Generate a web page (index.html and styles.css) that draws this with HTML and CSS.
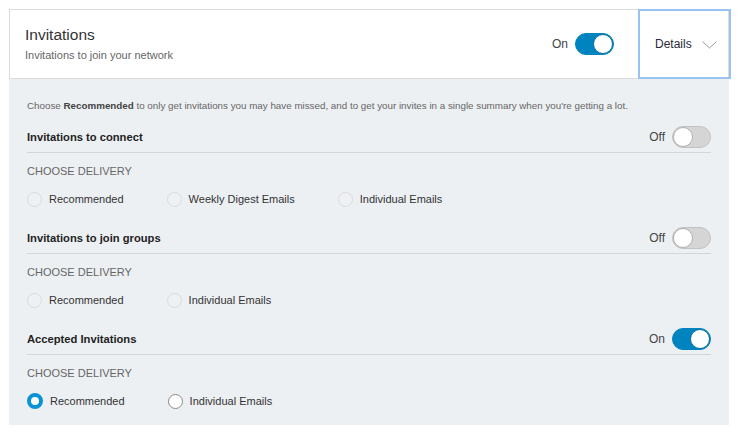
FILE: index.html
```html
<!DOCTYPE html>
<html lang="en">
<head>
    <meta charset="UTF-8">
    <meta name="viewport" content="width=device-width, initial-scale=1.0">
    <title>Invitations settings</title>
    <link rel="stylesheet" href="styles.css">
</head>
<body>
    <div class="settings">
        <div class="header">
            <div class="header-text">
                <div class="title">Invitations</div>
                <div class="subtitle">Invitations to join your network</div>
            </div>
            <div class="switch-wrap header-switch">
                <span class="switch-label">On</span>
                <span class="toggle on"><span class="knob"></span></span>
            </div>
            <div class="details">
                <span>Details</span>
                <svg class="chevron" width="15" height="8" viewBox="0 0 15 8">
                    <polyline points="0.5,0.5 7.5,7 14.5,0.5" fill="none" stroke="#9a9a9a" stroke-width="1"/>
                </svg>
            </div>
        </div>

        <div class="panel">
            <p class="intro">Choose <b>Recommended</b> to only get invitations you may have missed, and to get your invites in a single summary when you're getting a lot.</p>

            <div class="group">
                <div class="group-head">
                    <span class="group-title">Invitations to connect</span>
                    <div class="switch-wrap">
                        <span class="switch-label">Off</span>
                        <span class="toggle"><span class="knob"></span></span>
                    </div>
                </div>
                <div class="delivery-label">CHOOSE DELIVERY</div>
                <div class="options">
                    <label class="option"><span class="radio disabled"></span>Recommended</label>
                    <label class="option"><span class="radio disabled"></span>Weekly Digest Emails</label>
                    <label class="option"><span class="radio disabled"></span>Individual Emails</label>
                </div>
            </div>

            <div class="group">
                <div class="group-head">
                    <span class="group-title">Invitations to join groups</span>
                    <div class="switch-wrap">
                        <span class="switch-label">Off</span>
                        <span class="toggle"><span class="knob"></span></span>
                    </div>
                </div>
                <div class="delivery-label">CHOOSE DELIVERY</div>
                <div class="options">
                    <label class="option"><span class="radio disabled"></span>Recommended</label>
                    <label class="option"><span class="radio disabled"></span>Individual Emails</label>
                </div>
            </div>

            <div class="group">
                <div class="group-head">
                    <span class="group-title">Accepted Invitations</span>
                    <div class="switch-wrap">
                        <span class="switch-label">On</span>
                        <span class="toggle on"><span class="knob"></span></span>
                    </div>
                </div>
                <div class="delivery-label">CHOOSE DELIVERY</div>
                <div class="options">
                    <label class="option"><span class="radio checked"></span>Recommended</label>
                    <label class="option"><span class="radio"></span>Individual Emails</label>
                </div>
            </div>
        </div>
    </div>
</body>
</html>
```

FILE: styles.css
```css
:root {
    --font: "Liberation Sans", Arial, Helvetica, sans-serif;
    --text-main: #333333;
    --text-secondary: #666666;
    --panel-bg: #edf0f3;
    --line: #d3d6d9;
    --accent: #0084bf;
}
body {
    font-family: var(--font);
    background-color: #ffffff;
    margin: 0;
    color: var(--text-main);
}
.settings {
    width: 720px;
    margin: 9px 0 0 9px;
}
.header {
    display: flex;
    height: 70px;
    box-sizing: border-box;
    border: 1px solid #dcdcdc;
    background-color: #ffffff;
}
.header-text {
    flex: 1;
    padding: 16px 15px 0;
}
.title {
    font-size: 15.5px;
    line-height: 18px;
    color: #333;
}
.subtitle {
    font-size: 11px;
    line-height: 14px;
    margin-top: 4px;
    color: #666;
}
.switch-wrap {
    display: flex;
    align-items: center;
    gap: 7px;
}
.header-switch {
    margin-right: 24px;
}
.switch-label {
    font-size: 12px;
    color: #444;
}
.toggle {
    display: flex;
    width: 39px;
    height: 22px;
    box-sizing: border-box;
    padding: 1px;
    border-radius: 11px;
    background-color: #d5d5d5;
    border: 1px solid #c2c2c2;
}
.toggle.on {
    justify-content: flex-end;
    background-color: var(--accent);
    border-color: var(--accent);
}
.knob {
    width: 20px;
    height: 20px;
    margin: -1px;
    box-sizing: border-box;
    border-radius: 50%;
    background-color: #ffffff;
    border: 1px solid #b0b0b0;
}
.toggle.on .knob {
    border-color: #0a6fa0;
}
.details {
    display: flex;
    align-items: center;
    gap: 10px;
    width: 93px;
    box-sizing: border-box;
    margin: -1px -3px -1px 0;
    padding-left: 15px;
    border: 2px solid #98c2f3;
    font-size: 12px;
    color: #2a2a3a;
}
.chevron {
    margin-top: 2px;
}
.panel {
    background-color: var(--panel-bg);
    padding: 20px 18px 16px;
}
.intro {
    margin: 0;
    font-size: 9.8px;
    line-height: 14px;
    color: #666;
}
.intro b {
    color: #444;
}
.group {
    margin-top: 20px;
}
.group:first-of-type {
    margin-top: 13px;
}
.group-head {
    display: flex;
    justify-content: space-between;
    align-items: center;
    padding-bottom: 4px;
    border-bottom: 1px solid var(--line);
}
.group-title {
    font-size: 11.2px;
    font-weight: bold;
    color: #222;
}
.delivery-label {
    margin-top: 11px;
    font-size: 11px;
    line-height: 14px;
    color: #666;
}
.options {
    display: flex;
    gap: 43px;
    margin-top: 13px;
}
.option {
    display: flex;
    align-items: center;
    gap: 7px;
    height: 16px;
    font-size: 11px;
    color: #333;
}
.radio {
    width: 15px;
    height: 15px;
    box-sizing: border-box;
    border-radius: 50%;
    border: 1px solid #8a8a8a;
    background-color: #ffffff;
}
.radio.disabled {
    border-color: #d8dbde;
    background-color: #eef0f2;
}
.radio.checked {
    width: 16px;
    height: 16px;
    border: 4px solid #0a93d4;
}
```
